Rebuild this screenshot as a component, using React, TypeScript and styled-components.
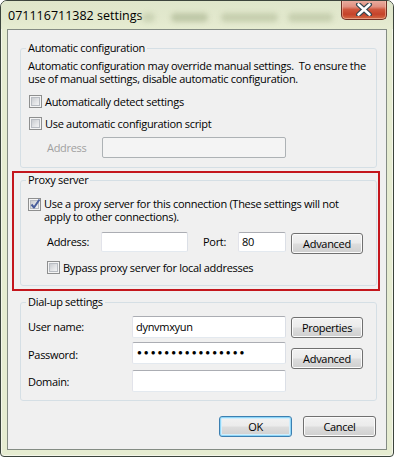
import React from "react";
import styled, { createGlobalStyle, css } from "styled-components";

const Global = createGlobalStyle`
  html, body { margin: 0; padding: 0; background: #ffffff; }
  body {
    font-family: "Open Sans", "Noto Sans", sans-serif;
    font-size: 11px;
    letter-spacing: -0.3px;
    color: #000;
  }
  * { box-sizing: border-box; }
`;

const Win = styled.div`
  width: 394px;
  height: 457px;
  display: flex;
  flex-direction: column;
  background: #e6ecd1;
  border: 1px solid #3c443c;
  border-radius: 7px 7px 4px 4px;
  box-shadow: inset 0 0 0 1px rgba(255, 255, 255, 0.55);
  overflow: hidden;
`;

const TitleBar = styled.div`
  height: 28px;
  flex: none;
  display: flex;
  align-items: flex-start;
  padding-left: 7px;
  background: linear-gradient(#dfe6cb, #e2e8cd 60%, #e6ecd1);
`;

const Title = styled.div`
  width: 126px;
  margin-top: 7px;
  line-height: 15px;
  font-size: 12.5px;
  letter-spacing: 0;
  white-space: nowrap;
  color: #000;
`;

const Blurs = styled.div`
  display: flex;
  margin-top: 12px;
  height: 10px;
`;

const Blob = styled.span<{ $w: number; $ml: number; $tone?: string }>`
  width: ${(p) => p.$w}px;
  margin-left: ${(p) => p.$ml}px;
  height: 9px;
  border-radius: 5px;
  background: ${(p) => p.$tone || "#b6c09e"};
  filter: blur(2.5px);
  opacity: 0.8;
`;

const Close = styled.div`
  margin-left: auto;
  margin-right: 6px;
  margin-top: -1px;
  width: 46px;
  height: 20px;
  display: flex;
  align-items: center;
  justify-content: center;
  border: 1px solid #6f2f24;
  border-top: none;
  border-radius: 0 0 5px 5px;
  background: linear-gradient(#ebb0a2 0%, #e09080 35%, #cf573d 50%, #c5432a 75%, #d46a45 100%);
  box-shadow: inset 0 0 0 1px rgba(255, 220, 200, 0.45);
`;

const Client = styled.div`
  margin: 0 6px;
  height: 421px;
  flex: none;
  border: 1px solid #848c84;
  background: #f0f0f0;
  padding: 11px 9px 0 12px;
  display: flex;
  flex-direction: column;
`;

const Group = styled.fieldset<{ $pb: number; $mt?: number }>`
  margin: ${(p) => p.$mt || 0}px 0 0 0;
  padding: 0 7px ${(p) => p.$pb}px 7px;
  min-width: 0;
  border: 1px solid #d5dfe5;
  border-radius: 3px;
  display: flex;
  flex-direction: column;
`;

const Legend = styled.legend`
  padding: 0 2px;
  margin-left: -2px;
  line-height: 14px;
  color: #000;
`;

const Desc = styled.div`
  margin-top: 4px;
  line-height: 13px;
  white-space: pre;
`;

const CheckRow = styled.div<{ $mt: number; $ml?: number }>`
  display: flex;
  align-items: center;
  height: 16px;
  margin-top: ${(p) => p.$mt}px;
  margin-left: ${(p) => p.$ml || 0}px;
`;

const CheckRowTop = styled.div<{ $mt: number }>`
  display: flex;
  align-items: flex-start;
  margin-top: ${(p) => p.$mt}px;
`;

const Box = styled.span<{ $top?: number }>`
  position: relative;
  flex: none;
  width: 13px;
  height: 13px;
  margin-top: ${(p) => p.$top || 0}px;
  margin-right: 3px;
  border: 1px solid #8e8f8f;
  background: #f4f4f4;
  display: flex;
  align-items: center;
  justify-content: center;
`;

const BoxInner = styled.span`
  width: 9px;
  height: 9px;
  border: 1px solid #b8bcc2;
  background: linear-gradient(135deg, #c9ccd0 0%, #e4e5e7 60%, #f2f2f3 100%);
`;

const Tick = styled.svg`
  position: absolute;
  left: -1px;
  top: -2px;
`;

const CheckLabel = styled.span`
  line-height: 13px;
  white-space: pre;
`;

const Row = styled.div<{ $mt: number; $ml?: number; $align?: string }>`
  display: flex;
  align-items: ${(p) => p.$align || "center"};
  margin-top: ${(p) => p.$mt}px;
  margin-left: ${(p) => p.$ml || 0}px;
`;

const Label = styled.span<{ $w: number; $ml?: number; $dim?: boolean; $mt?: number }>`
  flex: none;
  width: ${(p) => p.$w}px;
  margin-left: ${(p) => p.$ml || 0}px;
  margin-top: ${(p) => p.$mt || 0}px;
  line-height: 14px;
  color: ${(p) => (p.$dim ? "#a0a0a0" : "#000")};
  white-space: nowrap;
`;

const TextBox = styled.div<{ $w: number; $h: number; $disabled?: boolean }>`
  flex: none;
  width: ${(p) => p.$w}px;
  height: ${(p) => p.$h}px;
  padding-left: 3px;
  display: flex;
  align-items: center;
  border: 1px solid;
  border-color: #abadb3 #dbdfe6 #e3e9ef #e2e3ea;
  border-radius: 2px;
  background: #ffffff;
  line-height: 14px;
  ${(p) =>
    p.$disabled &&
    css`
      background: #f4f4f4;
      border-color: #adb2b5;
    `}
`;

const Dots = styled.span`
  font-family: "Liberation Sans", "DejaVu Sans", sans-serif;
  font-size: 8px;
  letter-spacing: 2px;
  padding-left: 1px;
`;

const Button = styled.div<{ $w: number; $h?: number; $ml?: number; $mt?: number; $default?: boolean }>`
  flex: none;
  width: ${(p) => p.$w}px;
  height: ${(p) => p.$h || 21}px;
  margin-left: ${(p) => p.$ml || 0}px;
  margin-top: ${(p) => p.$mt || 0}px;
  display: flex;
  align-items: center;
  justify-content: center;
  border: 1px solid #707070;
  border-radius: 3px;
  background: linear-gradient(#f2f2f2 0%, #ebebeb 48%, #dddddd 52%, #cfcfcf 100%);
  box-shadow: inset 0 0 0 1px #fbfbfb;
  line-height: 14px;
  color: #000;
  ${(p) =>
    p.$default &&
    css`
      border-color: #3c7fb1;
      box-shadow: inset 0 0 0 1px #8fd6f7, inset 0 0 0 2px #d2eefc;
    `}
`;

const RedFrame = styled.div`
  margin: 3px -3px 0 -8px;
  padding: 0 1px 3px 6px;
  border: 2px solid #c4161c;
  display: flex;
  flex-direction: column;
`;

const DialBody = styled.div`
  display: flex;
  margin-top: 7px;
`;

const DialFields = styled.div`
  display: flex;
  flex-direction: column;
`;

const DialButtons = styled.div`
  display: flex;
  flex-direction: column;
  margin-left: 5px;
  padding-top: 1px;
  gap: 10px;
`;

const Footer = styled.div`
  display: flex;
  justify-content: flex-end;
  gap: 11px;
  margin-top: 15px;
  margin-right: 1px;
`;

const Check: React.FC<{ checked?: boolean; top?: number }> = ({ checked, top }) => (
  <Box $top={top}>
    <BoxInner />
    {checked && (
      <Tick width="14" height="14" viewBox="0 0 14 14">
        <path d="M3.5 7.5 L6 10.5 L11.5 2.5" fill="none" stroke="#4a5f9c" strokeWidth="2" strokeLinejoin="round" />
      </Tick>
    )}
  </Box>
);

export default function App() {
  return (
    <>
      <Global />
      <Win>
        <TitleBar>
          <Title>071116711382 settings</Title>
          <Blurs>
            <Blob $w={13} $ml={8} $tone="#c5ceae" />
            <Blob $w={37} $ml={16} />
            <Blob $w={57} $ml={13} $tone="#c0c9a8" />
            <Blob $w={45} $ml={10} $tone="#c0c9a8" />
          </Blurs>
          <Close>
            <svg width="18" height="13" viewBox="0 0 18 13">
              <path d="M3.5 1.5 L14.5 11.5 M14.5 1.5 L3.5 11.5" stroke="#33464f" strokeWidth="5" strokeLinecap="round" />
              <path d="M3.5 1.5 L14.5 11.5 M14.5 1.5 L3.5 11.5" stroke="#ffffff" strokeWidth="2.6" strokeLinecap="round" />
            </svg>
          </Close>
        </TitleBar>
        <Client>
          <Group $pb={9}>
            <Legend>Automatic configuration</Legend>
            <Desc>
              {"Automatic configuration may override manual settings.  To ensure the\nuse of manual settings, disable automatic configuration."}
            </Desc>
            <CheckRow $mt={8} $ml={1}>
              <Check />
              <CheckLabel>Automatically detect settings</CheckLabel>
            </CheckRow>
            <CheckRow $mt={6} $ml={1}>
              <Check />
              <CheckLabel>Use automatic configuration script</CheckLabel>
            </CheckRow>
            <Row $mt={6} $ml={19}>
              <Label $w={55} $dim>
                Address
              </Label>
              <TextBox $w={184} $h={21} $disabled />
            </Row>
          </Group>

          <RedFrame>
            <Group $pb={10}>
              <Legend>Proxy server</Legend>
              <CheckRowTop $mt={10}>
                <Check checked top={1} />
                <CheckLabel>
                  {"Use a proxy server for this connection (These settings will not\napply to other connections)."}
                </CheckLabel>
              </CheckRowTop>
              <Row $mt={9} $ml={19} $align="flex-start">
                <Label $w={54} $mt={3}>
                  Address:
                </Label>
                <TextBox $w={87} $h={20} />
                <Label $w={35} $ml={15} $mt={3}>
                  Port:
                </Label>
                <TextBox $w={48} $h={20}>
                  80
                </TextBox>
                <Button $w={72} $ml={5} $mt={1}>
                  Advanced
                </Button>
              </Row>
              <CheckRow $mt={5} $ml={19}>
                <Check />
                <CheckLabel>Bypass proxy server for local addresses</CheckLabel>
              </CheckRow>
            </Group>
          </RedFrame>

          <Group $pb={8} $mt={4}>
            <Legend>Dial-up settings</Legend>
            <DialBody>
              <DialFields>
                <Row $mt={0}>
                  <Label $w={104}>User name:</Label>
                  <TextBox $w={154} $h={22}>
                    dynvmxyun
                  </TextBox>
                </Row>
                <Row $mt={4}>
                  <Label $w={104} $mt={4}>
                    Password:
                  </Label>
                  <TextBox $w={154} $h={22}>
                    <Dots>●●●●●●●●●●●●●●●●</Dots>
                  </TextBox>
                </Row>
                <Row $mt={6}>
                  <Label $w={104} $mt={2}>
                    Domain:
                  </Label>
                  <TextBox $w={154} $h={22} />
                </Row>
              </DialFields>
              <DialButtons>
                <Button $w={72}>Properties</Button>
                <Button $w={72}>Advanced</Button>
              </DialButtons>
            </DialBody>
          </Group>

          <Footer>
            <Button $w={73} $default>
              OK
            </Button>
            <Button $w={73}>Cancel</Button>
          </Footer>
        </Client>
      </Win>
    </>
  );
}
